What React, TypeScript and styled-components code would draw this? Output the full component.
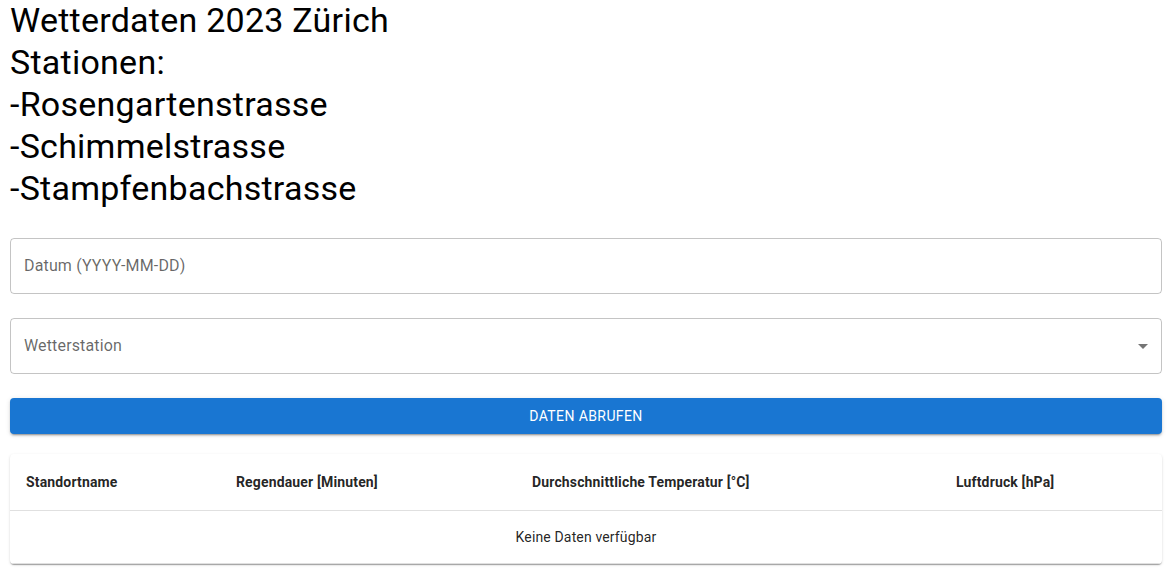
import React from "react";
import styled, { createGlobalStyle } from "styled-components";

const Global = createGlobalStyle`
  html, body { margin: 0; padding: 0; background: #fff; }
  body { font-family: Roboto, "Helvetica Neue", Arial, sans-serif; color: #000; }
  * { box-sizing: border-box; }
`;

const Page = styled.div`
  display: flex;
  flex-direction: column;
  padding: 0 12px 20px 10px;
`;

const Title = styled.h4`
  margin: 0 0 0.35em;
  font-family: Roboto, sans-serif;
  font-weight: 400;
  font-size: 34px;
  line-height: 1.235;
  letter-spacing: 0.00735em;
  color: #000;
`;

const Field = styled.div`
  margin: 16px 0 8px;
  height: 56px;
  border: 1px solid rgba(0,0,0,0.23);
  border-radius: 4px;
  display: flex;
  align-items: center;
  padding: 0 13px;
`;

const Label = styled.span`
  font-size: 16px;
  line-height: 1.4375em;
  letter-spacing: 0.00938em;
  color: rgba(0,0,0,0.6);
  flex: 1;
`;

const ArrowIcon = styled.svg`
  width: 24px;
  height: 24px;
  fill: rgba(0,0,0,0.54);
  margin-right: -7px;
`;

const Button = styled.button`
  display: block;
  width: 100%;
  margin-top: 16px;
  height: 36px;
  border: none;
  border-radius: 4px;
  background: #1976d2;
  color: #fff;
  font-family: Roboto, sans-serif;
  font-weight: 400;
  font-size: 14px;
  line-height: 1.75;
  letter-spacing: 0.02857em;
  text-transform: uppercase;
  box-shadow: 0px 3px 1px -2px rgba(0,0,0,0.2), 0px 2px 2px 0px rgba(0,0,0,0.14), 0px 1px 5px 0px rgba(0,0,0,0.12);
`;

const Paper = styled.div`
  margin-top: 20px;
  border-radius: 4px;
  background: #fff;
  box-shadow: 0px 2px 1px -1px rgba(0,0,0,0.2), 0px 1px 1px 0px rgba(0,0,0,0.14), 0px 1px 3px 0px rgba(0,0,0,0.12);
  overflow: hidden;
`;

const Table = styled.table`
  width: 100%;
  border-collapse: collapse;
  border-spacing: 0;
`;

const Th = styled.th<{ $w: number }>`
  width: ${(p) => p.$w}px;
  text-align: left;
  padding: 16px;
  font-size: 14px;
  line-height: 24px;
  font-weight: 700;
  letter-spacing: 0.01071em;
  color: rgba(0,0,0,0.87);
  border-bottom: 1px solid rgba(224,224,224,1);
`;

const Td = styled.td`
  padding: 16px;
  font-size: 14px;
  line-height: 1.43;
  letter-spacing: 0.01071em;
  text-align: center;
  color: rgba(0,0,0,0.87);
  border-bottom: 1px solid rgba(224,224,224,1);
`;

export default function App() {
  return (
    <Page>
      <Global />
      <Title>
        Wetterdaten 2023 Zürich
        <br />
        Stationen:
        <br />
        -Rosengartenstrasse
        <br />
        -Schimmelstrasse
        <br />
        -Stampfenbachstrasse
      </Title>
      <Field>
        <Label>Datum (YYYY-MM-DD)</Label>
      </Field>
      <Field>
        <Label>Wetterstation</Label>
        <ArrowIcon viewBox="0 0 24 24">
          <path d="M7 10l5 5 5-5z" />
        </ArrowIcon>
      </Field>
      <Button>Daten abrufen</Button>
      <Paper>
        <Table>
          <thead>
            <tr>
              <Th $w={210}>Standortname</Th>
              <Th $w={296}>Regendauer [Minuten]</Th>
              <Th $w={424}>Durchschnittliche Temperatur [°C]</Th>
              <Th $w={222}>Luftdruck [hPa]</Th>
            </tr>
          </thead>
          <tbody>
            <tr>
              <Td colSpan={4}>Keine Daten verfügbar</Td>
            </tr>
          </tbody>
        </Table>
      </Paper>
    </Page>
  );
}
